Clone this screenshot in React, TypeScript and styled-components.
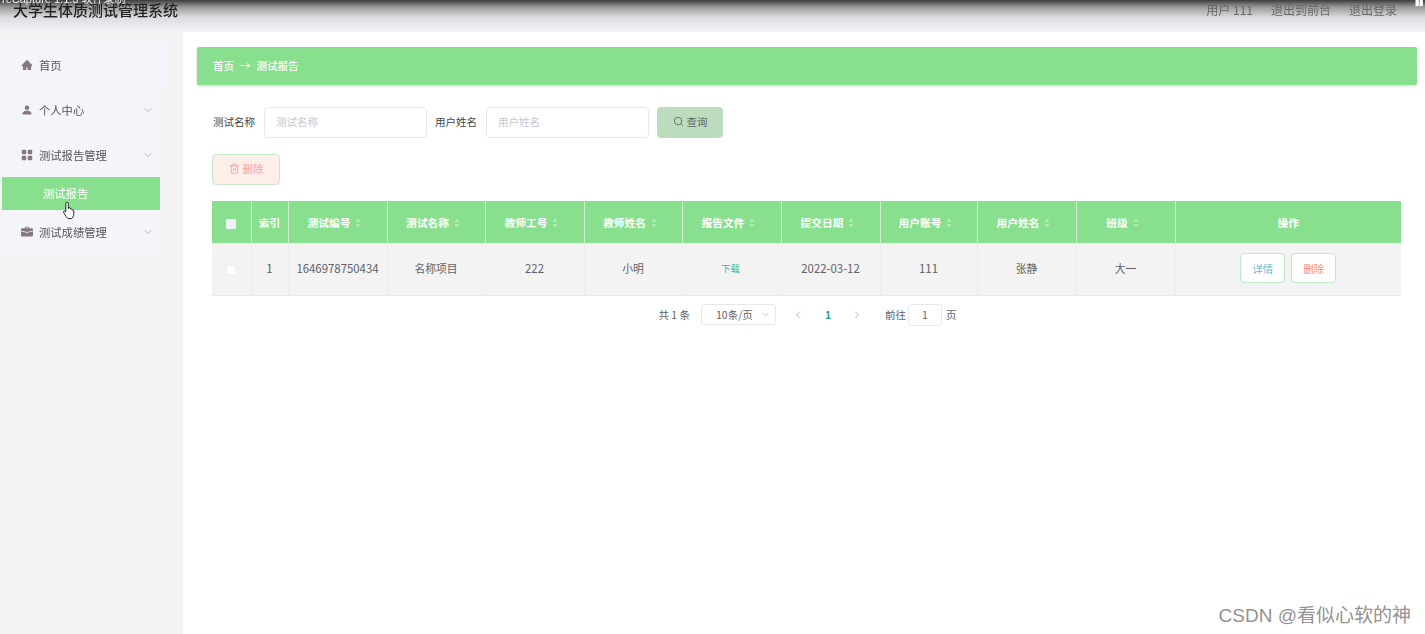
import React from "react";
import styled, { createGlobalStyle } from "styled-components";
import { ChevronDown, ChevronLeft, ChevronRight, Search, Trash2 } from "lucide-react";
import { AiFillHome } from "react-icons/ai";
import { BsPersonFill, BsGridFill, BsBriefcaseFill } from "react-icons/bs";

const Global = createGlobalStyle`
  html, body { margin: 0; padding: 0; background: #fff; }
  * { box-sizing: border-box; }
  body { font-family: "Noto Sans CJK SC", "Liberation Sans", sans-serif; }
`;

const Page = styled.div`
  position: relative;
  width: 1425px;
  height: 634px;
  overflow: hidden;
  display: flex;
  flex-direction: column;
  filter: blur(0.6px);
`;

const Header = styled.header`
  height: 32px;
  flex: none;
  display: flex;
  align-items: center;
  justify-content: space-between;
  padding: 0 28px 15px 13px;
  background: linear-gradient(180deg, #3c3c3c 0%, #9a9a9a 22%, #dcdde0 55%, #f3f4f7 100%);
`;

const Title = styled.div`
  font-size: 15px;
  font-weight: 500;
  line-height: 20px;
  color: #222;
  margin-top: 3px;
`;

const HeaderLinks = styled.nav`
  display: flex;
  gap: 18px;
  font-size: 12px;
  color: #666;
  margin-top: 2px;
`;

const Body = styled.div`
  flex: 1;
  display: flex;
  min-height: 0;
`;

const Sidebar = styled.aside`
  width: 183px;
  flex: none;
  background: #f3f3f3;
  padding: 10px 0 0 2px;
`;

const Menu = styled.ul`
  list-style: none;
  margin: 0;
  padding: 0;
  width: 158px;
  background: #f3f5fb;
`;

const MenuItem = styled.li<{ $wide?: boolean; $short?: boolean }>`
  height: ${(p) => (p.$short ? "43px" : "45px")};
  width: ${(p) => (p.$wide ? "165px" : "158px")};
  display: flex;
  align-items: center;
  padding-left: 19px;
  padding-right: 6px;
  background: #f3f5fb;
  color: #555;
  font-size: 11.3px;
  gap: 6px;
  svg.lead { color: #85797e; flex: none; }
  span { flex: 1; }
  svg.chev { color: #b5b7bb; flex: none; }
`;

const SubItem = styled.li`
  height: 33px;
  background: #88e08f;
  color: #fff;
  font-size: 11.3px;
  line-height: 32px;
  padding-left: 41px;
`;

const Main = styled.main`
  flex: 1;
  min-width: 0;
  background: #fff;
  padding: 15px 8px 0 14px;
`;

const Crumbs = styled.div`
  height: 38px;
  background: #88e08f;
  box-shadow: 0 1px 3px rgba(0, 0, 0, 0.18);
  border-radius: 2px;
  display: flex;
  align-items: center;
  gap: 6px;
  padding: 0 0 2px 16px;
  color: #fff;
  font-size: 10.5px;
  font-weight: 500;
`;

const Content = styled.div`
  padding: 22px 16px 0 15px;
`;

const SearchRow = styled.div`
  display: flex;
  align-items: center;
  height: 31px;
`;

const Label = styled.label`
  font-size: 10.5px;
  color: #444;
  width: 52px;
  flex: none;
  padding: 0 0 2px 1px;
`;

const FakeInput = styled.div`
  width: 163px;
  height: 31px;
  margin-right: 7px;
  border: 1px solid #e8e9ec;
  border-radius: 4px;
  background: #fff;
  color: #c4c6cb;
  font-size: 10.5px;
  line-height: 27px;
  padding-left: 11px;
`;

const SearchButton = styled.button`
  width: 66px;
  height: 31px;
  margin-left: 1px;
  border: 0;
  border-radius: 4px;
  background: #bcdcbd;
  color: #5d6a60;
  font: inherit;
  font-size: 10.5px;
  display: flex;
  align-items: center;
  justify-content: center;
  gap: 3px;
  padding: 0 0 2px;
`;

const Toolbar = styled.div`
  margin-top: 16px;
  margin-bottom: 16px;
`;

const DeleteButton = styled.button`
  width: 68px;
  height: 31px;
  border: 1px solid #c9e8c8;
  border-radius: 4px;
  background: #fdeeea;
  color: #f7a49a;
  font: inherit;
  font-size: 10.5px;
  display: flex;
  align-items: center;
  justify-content: center;
  gap: 3px;
  padding: 0 0 2px;
`;

const Table = styled.table`
  border-collapse: collapse;
  table-layout: fixed;
  width: 1189px;
`;

const HeadCell = styled.th`
  height: 42px;
  background: #88e08f;
  color: #fff;
  font-size: 10.7px;
  font-weight: 700;
  padding: 0;
  text-align: center;
  border-right: 1px solid #cdeecf;
  &:last-child { border-right: 0; }
`;

const SortMark = styled.svg`
  display: inline-block;
  margin: 0 6px 0 5px;
  vertical-align: -1px;
`;

const Cell = styled.td<{ $num?: boolean }>`
  height: 52px;
  background: #f3f3f3;
  color: #606266;
  font-size: ${(p) => (p.$num ? "11.4px" : "10.8px")};
  padding: 0 0 1px;
  text-align: center;
  border-right: 1px solid #ebeef0;
  border-bottom: 1px solid #e6e8eb;
  &:last-child { border-right: 0; }
`;

const Check = styled.span<{ $head?: boolean }>`
  display: inline-block;
  width: 10px;
  height: 10px;
  vertical-align: middle;
  border-radius: 1px;
  background: ${(p) => (p.$head ? "#eef2fb" : "#fff")};
  border: 1px solid ${(p) => (p.$head ? "#eef2fb" : "#eceef1")};
`;

const DownloadLink = styled.a`
  color: #3bb596;
  font-size: 9.5px;
  position: relative;
  top: -1px;
  left: -1px;
`;

const ActionRow = styled.div`
  display: flex;
  justify-content: center;
  gap: 6px;
`;

const ActionButton = styled.button<{ $danger?: boolean }>`
  width: 45px;
  height: 30px;
  border: 1px solid #bfe8c4;
  border-radius: 4px;
  background: #fff;
  color: ${(p) => (p.$danger ? "#f48b80" : "#69b8d6")};
  font: inherit;
  font-size: 10.5px;
  padding: 0;
`;

const Pager = styled.div`
  display: flex;
  align-items: center;
  justify-content: center;
  height: 24px;
  margin-top: 7px;
  padding-left: 2px;
  font-size: 10.5px;
  color: #606266;
`;

const PageSize = styled.div`
  width: 75px;
  height: 21px;
  margin: 0 16px 0 11px;
  border: 1px solid #e6e8eb;
  border-radius: 3px;
  display: flex;
  align-items: center;
  justify-content: space-between;
  padding: 0 4px 0 14px;
  svg { color: #bbb; }
`;

const Current = styled.span`
  width: 28px;
  margin: 0 9px 0 10px;
  text-align: center;
  color: #1fa08c;
  font-weight: 700;
`;

const PagerArrow = styled.span`
  display: flex;
  color: #b3b5b9;
`;

const Jump = styled.div`
  width: 34px;
  height: 22px;
  margin: 0 4px 0 2px;
  border: 1px solid #e6e8eb;
  border-radius: 3px;
  text-align: center;
  line-height: 20px;
  color: #606266;
`;

const GoLabel = styled.span`
  margin-left: 22px;
`;

const CaptureLabel = styled.div`
  position: absolute;
  left: 2px;
  top: -10px;
  font: 11px "Liberation Sans", "Noto Sans CJK SC", sans-serif;
  color: #f2f2f2;
`;

const Corner = styled.div`
  position: absolute;
  right: 2px;
  top: -2px;
  font: bold 8px "Liberation Sans", sans-serif;
  color: #fff;
`;

const Watermark = styled.div`
  position: absolute;
  right: 14px;
  bottom: 6px;
  font-size: 19px;
  line-height: 24px;
  color: #939393;
  font-family: "Liberation Sans", "Noto Sans CJK SC", sans-serif;
`;

const Cursor = styled.svg`
  position: absolute;
  left: 62px;
  top: 201px;
`;

const columns = [39, 37, 99, 98, 99, 98, 99, 99, 97, 99, 99, 226];
const heads = ["测试编号", "测试名称", "教师工号", "教师姓名", "报告文件", "提交日期", "用户账号", "用户姓名", "班级"];

const Sort = () => (
  <SortMark width="6" height="10" viewBox="0 0 6 10">
    <path d="M3 0.500 5.500 4H.5zM3 9.500.5 6h5z" fill="#b4ebb8" />
  </SortMark>
);

export default function App() {
  return (
    <Page>
      <Global />
      <Header>
        <Title>大学生体质测试管理系统</Title>
        <HeaderLinks>
          <span>用户 111</span>
          <span>退出到前台</span>
          <span>退出登录</span>
        </HeaderLinks>
      </Header>
      <Body>
        <Sidebar>
          <Menu>
            <MenuItem $wide>
              <AiFillHome className="lead" size={12} />
              <span>首页</span>
            </MenuItem>
            <MenuItem>
              <BsPersonFill className="lead" size={12} />
              <span>个人中心</span>
              <ChevronDown className="chev" size={12} />
            </MenuItem>
            <MenuItem>
              <BsGridFill className="lead" size={12} />
              <span>测试报告管理</span>
              <ChevronDown className="chev" size={12} />
            </MenuItem>
            <SubItem>测试报告</SubItem>
            <MenuItem $short>
              <BsBriefcaseFill className="lead" size={12} />
              <span>测试成绩管理</span>
              <ChevronDown className="chev" size={12} />
            </MenuItem>
          </Menu>
        </Sidebar>
        <Main>
          <Crumbs>
            <span>首页</span>
            <span>→</span>
            <span>测试报告</span>
          </Crumbs>
          <Content>
            <SearchRow>
              <Label>测试名称</Label>
              <FakeInput>测试名称</FakeInput>
              <Label>用户姓名</Label>
              <FakeInput>用户姓名</FakeInput>
              <SearchButton>
                <Search size={11} />
                查询
              </SearchButton>
            </SearchRow>
            <Toolbar>
              <DeleteButton>
                <Trash2 size={11} />
                删除
              </DeleteButton>
            </Toolbar>
            <Table>
              <colgroup>
                {columns.map((w, i) => (
                  <col key={i} width={w} />
                ))}
              </colgroup>
              <thead>
                <tr>
                  <HeadCell>
                    <Check $head />
                  </HeadCell>
                  <HeadCell>索引</HeadCell>
                  {heads.map((h) => (
                    <HeadCell key={h}>
                      {h}
                      <Sort />
                    </HeadCell>
                  ))}
                  <HeadCell>操作</HeadCell>
                </tr>
              </thead>
              <tbody>
                <tr>
                  <Cell>
                    <Check />
                  </Cell>
                  <Cell $num>1</Cell>
                  <Cell $num>1646978750434</Cell>
                  <Cell>名称项目</Cell>
                  <Cell $num>222</Cell>
                  <Cell>小明</Cell>
                  <Cell>
                    <DownloadLink>下载</DownloadLink>
                  </Cell>
                  <Cell $num>2022-03-12</Cell>
                  <Cell $num>111</Cell>
                  <Cell>张静</Cell>
                  <Cell>大一</Cell>
                  <Cell>
                    <ActionRow>
                      <ActionButton>详情</ActionButton>
                      <ActionButton $danger>删除</ActionButton>
                    </ActionRow>
                  </Cell>
                </tr>
              </tbody>
            </Table>
            <Pager>
              <span>共 1 条</span>
              <PageSize>
                10条/页
                <ChevronDown size={11} />
              </PageSize>
              <PagerArrow>
                <ChevronLeft size={12} />
              </PagerArrow>
              <Current>1</Current>
              <PagerArrow>
                <ChevronRight size={12} />
              </PagerArrow>
              <GoLabel>前往</GoLabel>
              <Jump>1</Jump>
              <span>页</span>
            </Pager>
          </Content>
        </Main>
      </Body>
      <CaptureLabel>reCapture 1.1.3 软件录制</CaptureLabel>
      <Corner>▮▮</Corner>
      <Watermark>CSDN @看似心软的神</Watermark>
      <Cursor width="16" height="19" viewBox="0 0 16 19">
        <path
          d="M5 1.200c.8 0 1.300.6 1.300 1.400v5l.4-.1V6.700c.9-.5 1.700 0 1.700.8v.5c.8-.5 1.600 0 1.700.7v.5c.8-.4 1.700 0 1.700 1v3c0 1.800-1 3.800-2.500 4.400H6.400C5 17 3.600 14.800 1.600 11.500c-.6-1.100.6-2 1.500-1.200l.7.800V2.600C3.800 1.800 4.300 1.200 5 1.200z"
          fill="#fff"
          stroke="#222"
          strokeWidth="1"
          strokeLinejoin="round"
        />
      </Cursor>
    </Page>
  );
}
